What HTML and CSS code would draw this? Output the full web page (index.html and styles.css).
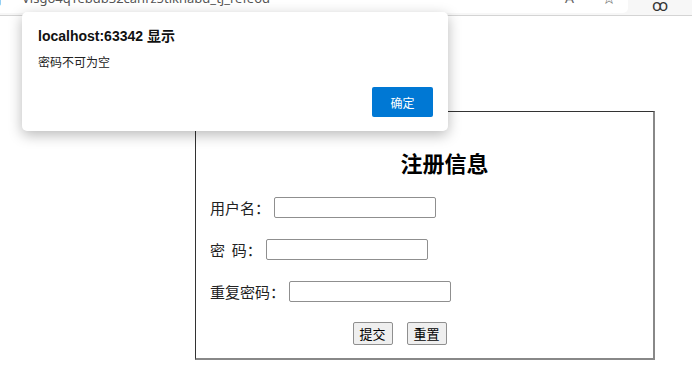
FILE: index.html
```html
<!DOCTYPE html>
<html lang="zh">
<head>
    <meta charset="UTF-8">
    <meta name="viewport" content="width=device-width, initial-scale=1.0">
    <title>注册信息</title>
    <link rel="stylesheet" href="styles.css">
</head>
<body>
    <div class="browser-bar">
        <div class="address">
            <span class="url"><span class="url-lead">ĵ·</span>Vlsgo4qYebdb32canrz5tikhabd_tj_refeod</span>
            <span class="addr-icons"><span>A</span><span>☆</span></span>
        </div>
        <span class="profile">ꝏ</span>
    </div>

    <div class="page">
        <form class="panel" onsubmit="return false">
            <h2 class="panel-title">注册信息</h2>
            <div class="row">
                <label>用户名：</label>
                <input type="text" class="field">
            </div>
            <div class="row">
                <label>密&nbsp;&nbsp;码：</label>
                <input type="password" class="field">
            </div>
            <div class="row">
                <label>重复密码：</label>
                <input type="password" class="field">
            </div>
            <div class="row actions">
                <button type="submit" class="btn">提交</button>
                <button type="reset" class="btn">重置</button>
            </div>
        </form>
    </div>

    <!-- alert() 弹窗 -->
    <div class="dialog">
        <div class="dialog-title">localhost:63342 显示</div>
        <div class="dialog-msg">密码不可为空</div>
        <div class="dialog-footer">
            <button class="dialog-ok">确定</button>
        </div>
    </div>
</body>
</html>
```

FILE: styles.css
```css
body {
    margin: 0;
    font-family: "Noto Sans CJK SC", "Noto Sans", sans-serif;
    color: #000;
    background: #fff;
}

.browser-bar {
    display: flex;
    height: 15px;
    background: #f7f7f7;
    border-bottom: 1px solid #d4d4d4;
    overflow: hidden;
}

.address {
    display: flex;
    justify-content: space-between;
    width: 628px;
    height: 30px;
    margin-top: -17px;
    background: #fff;
    border-radius: 0 0 5px 0;
    box-sizing: border-box;
    padding: 0 12px 0 0;
}

.url {
    font-family: "Noto Sans", sans-serif;
    font-size: 13px;
    line-height: 30px;
    color: #555;
    white-space: nowrap;
    margin-left: -2px;
}

.url-lead {
    display: inline-block;
    width: 24px;
}

.addr-icons {
    display: flex;
    gap: 28px;
    font-family: "Noto Sans", sans-serif;
    font-size: 14px;
    line-height: 30px;
    color: #666;
}

.profile {
    margin: -8px 0 0 24px;
    font-size: 16px;
    color: #333;
}

.page {
    padding: 95px 0 0 195px;
}

.panel {
    width: 460px;
    height: 249px;
    box-sizing: border-box;
    border: 1px solid #333;
    border-right: 2px solid #888;
    border-bottom: 2px solid #888;
    padding: 36px 0 0 14px;
}

.panel-title {
    margin: 0 0 10px;
    padding-left: 26px;
    text-align: center;
    font-size: 22px;
    line-height: 28px;
    font-weight: 700;
}

.row {
    display: flex;
    align-items: center;
    height: 42px;
    font-size: 15px;
    color: #222;
}

.row label {
    white-space: nowrap;
}

.field {
    width: 162px;
    height: 21px;
    box-sizing: border-box;
    margin: 0 0 0 4px;
    border: 1px solid #8f8f8f;
    border-radius: 2px;
    padding: 1px 2px;
}

.actions {
    justify-content: center;
    gap: 14px;
    padding-right: 64px;
}

.btn {
    width: 40px;
    height: 23px;
    padding: 0;
    font-family: inherit;
    font-size: 13px;
    color: #000;
    background: #efefef;
    border: 1px solid #8f8f8f;
    border-radius: 2px;
}

.dialog {
    position: absolute;
    left: 22px;
    top: 12px;
    width: 426px;
    height: 119px;
    box-sizing: border-box;
    padding: 15px 15px 0 16px;
    background: #fff;
    border-radius: 5px;
    box-shadow: 0 4px 14px rgba(0, 0, 0, 0.28);
}

.dialog-title {
    font-family: "Liberation Sans", "Noto Sans CJK SC", sans-serif;
    font-size: 14px;
    font-weight: 700;
    line-height: 18px;
    color: #111;
}

.dialog-msg {
    margin-top: 9px;
    font-size: 12px;
    line-height: 16px;
    color: #222;
}

.dialog-footer {
    display: flex;
    justify-content: flex-end;
    margin-top: 17px;
}

.dialog-ok {
    width: 61px;
    height: 30px;
    padding: 0;
    border: none;
    border-radius: 2px;
    background: #0078d4;
    color: #fff;
    font-family: inherit;
    font-size: 12px;
}
```
